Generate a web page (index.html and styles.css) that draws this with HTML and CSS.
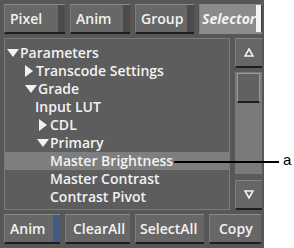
FILE: index.html
```html
<!DOCTYPE html>
<html lang="en">
<head>
    <meta charset="UTF-8">
    <title>Selector Panel</title>
    <link rel="stylesheet" href="styles.css">
</head>
<body>
    <div class="panel">
        <div class="btn-row top">
            <div class="btn w-pixel"><span class="label">Pixel</span><span class="strip"></span></div>
            <div class="btn w-anim"><span class="label">Anim</span><span class="strip"></span></div>
            <div class="btn w-group"><span class="label">Group</span><span class="strip"></span></div>
            <div class="btn w-selector active"><span class="label">Selector</span><span class="strip"></span></div>
        </div>

        <div class="main">
            <div class="tree">
                <div class="row lvl0"><svg class="tri" width="12" height="8" viewBox="0 0 12 8"><polygon points="0,0 12,0 6,8" fill="#f2f2f2"/></svg>Parameters</div>
                <div class="row lvl1"><svg class="tri-r" width="8" height="12" viewBox="0 0 8 12"><polygon points="0,0 8,6 0,12" fill="#f2f2f2"/></svg>Transcode Settings</div>
                <div class="row lvl1"><svg class="tri" width="12" height="8" viewBox="0 0 12 8"><polygon points="0,0 12,0 6,8" fill="#f2f2f2"/></svg>Grade</div>
                <div class="row lvl1 plain">Input LUT</div>
                <div class="row lvl2"><svg class="tri-r" width="8" height="12" viewBox="0 0 8 12"><polygon points="0,0 8,6 0,12" fill="#f2f2f2"/></svg>CDL</div>
                <div class="row lvl2"><svg class="tri" width="12" height="8" viewBox="0 0 12 8"><polygon points="0,0 12,0 6,8" fill="#f2f2f2"/></svg>Primary</div>
                <div class="row lvl3 selected">Master Brightness</div>
                <div class="row lvl3">Master Contrast</div>
                <div class="row lvl3">Contrast Pivot</div>
            </div>

            <div class="scroll">
                <div class="sbtn"><svg width="10" height="9" viewBox="0 0 10 9"><polygon points="5,1 9,8 1,8" fill="none" stroke="#f2f2f2" stroke-width="1.6"/></svg></div>
                <div class="track">
                    <div class="thumb"></div>
                </div>
                <div class="sbtn"><svg width="10" height="9" viewBox="0 0 10 9"><polygon points="1,1 9,1 5,8" fill="none" stroke="#f2f2f2" stroke-width="1.6"/></svg></div>
            </div>
        </div>

        <div class="btn-row bottom">
            <div class="btn w-anim2"><span class="label">Anim</span><span class="strip blue"></span></div>
            <div class="btn w-clear"><span class="label">ClearAll</span></div>
            <div class="btn w-selall"><span class="label">SelectAll</span></div>
            <div class="btn w-copy"><span class="label">Copy</span></div>
        </div>
    </div>

    <!-- callout -->
    <div class="callout-line"></div>
    <div class="callout-label">a</div>
</body>
</html>
```

FILE: styles.css
```css
body {
    margin: 0;
    padding: 0;
    background: #ffffff;
    font-family: "Open Sans", "Liberation Sans", sans-serif;
    width: 294px;
    height: 248px;
    overflow: hidden;
    position: relative;
}
.panel {
    width: 264px;
    height: 248px;
    box-sizing: border-box;
    background: #575757;
    padding: 4px 2px 0 4px;
    display: flex;
    flex-direction: column;
}
.btn-row {
    display: flex;
    gap: 5px;
    height: 30px;
}
.btn-row.bottom {
    margin-top: 4px;
}
.btn {
    position: relative;
    display: flex;
    align-items: center;
    box-sizing: border-box;
    background: #676767;
    border-top: 1px solid #8a8a8a;
    border-left: 1px solid #7c7c7c;
    border-bottom: 2px solid #1e1e1e;
    color: #f2f2f2;
    font-size: 14px;
    font-weight: 600;
    padding-left: 5px;
}
.btn .label {
    flex: 1;
}
.btn .strip {
    width: 7px;
    align-self: stretch;
    background: #4b4b4b;
}
.btn .strip.blue {
    background: #3f5b86;
}
.w-pixel { width: 61px; }
.w-anim { width: 60px; }
.w-group { width: 59px; }
.w-selector { width: 63px; }
.w-anim2 { width: 56px; }
.w-clear { width: 65px; padding-left: 7px; }
.w-selall { width: 69px; padding-left: 4px; }
.w-copy { width: 52px; padding-left: 9px; }

.btn.active {
    background: #8b8b8b;
    border-bottom-color: #8b8b8b;
    font-style: italic;
    font-weight: 700;
    padding-left: 2px;
}
.btn.active .strip {
    width: 8px;
    background: #f4f4f4;
    border-right: 1px solid #3a3a3a;
}

.main {
    display: flex;
    gap: 5px;
    margin-top: 4px;
    height: 172px;
}
.tree {
    width: 227px;
    box-sizing: border-box;
    background: #5d5d5d;
    border: 1px solid #7a7a7a;
    padding-top: 5px;
    color: #f2f2f2;
    font-size: 14px;
    font-weight: 600;
}
.row {
    height: 18px;
    line-height: 18px;
    display: flex;
    align-items: center;
    white-space: nowrap;
}
.row.selected {
    background: #7e7e7e;
}
.row .tri {
    margin-right: 1px;
}
.row .tri-r {
    margin-right: 3px;
}
.lvl0 { padding-left: 2px; }
.lvl1 { padding-left: 20px; }
.lvl1.plain { padding-left: 30px; }
.lvl2 { padding-left: 32px; }
.lvl2 .tri-r { margin-left: 2px; }
.lvl3 { padding-left: 45px; }

.scroll {
    width: 27px;
    display: flex;
    flex-direction: column;
}
.sbtn {
    height: 30px;
    box-sizing: border-box;
    background: #666666;
    border-top: 1px solid #858585;
    border-left: 1px solid #7c7c7c;
    border-bottom: 2px solid #1e1e1e;
    display: flex;
    align-items: center;
    justify-content: center;
}
.track {
    flex: 1;
    background: #7a7a7a;
    border-top: 4px solid #5a5a5a;
    padding-top: 1px;
    border-bottom: 6px solid #5a5a5a;
}
.thumb {
    height: 30px;
    margin: 0 2px;
    box-sizing: border-box;
    background: #616161;
    border: 1px solid #9a9a9a;
    border-bottom: 2px solid #1e1e1e;
}

.callout-line {
    position: absolute;
    left: 174px;
    top: 161px;
    width: 105px;
    height: 2px;
    background: #000000;
}
.callout-label {
    position: absolute;
    left: 283px;
    top: 151px;
    font-family: "Liberation Sans", Arial, sans-serif;
    font-size: 15px;
    color: #000000;
}
```
